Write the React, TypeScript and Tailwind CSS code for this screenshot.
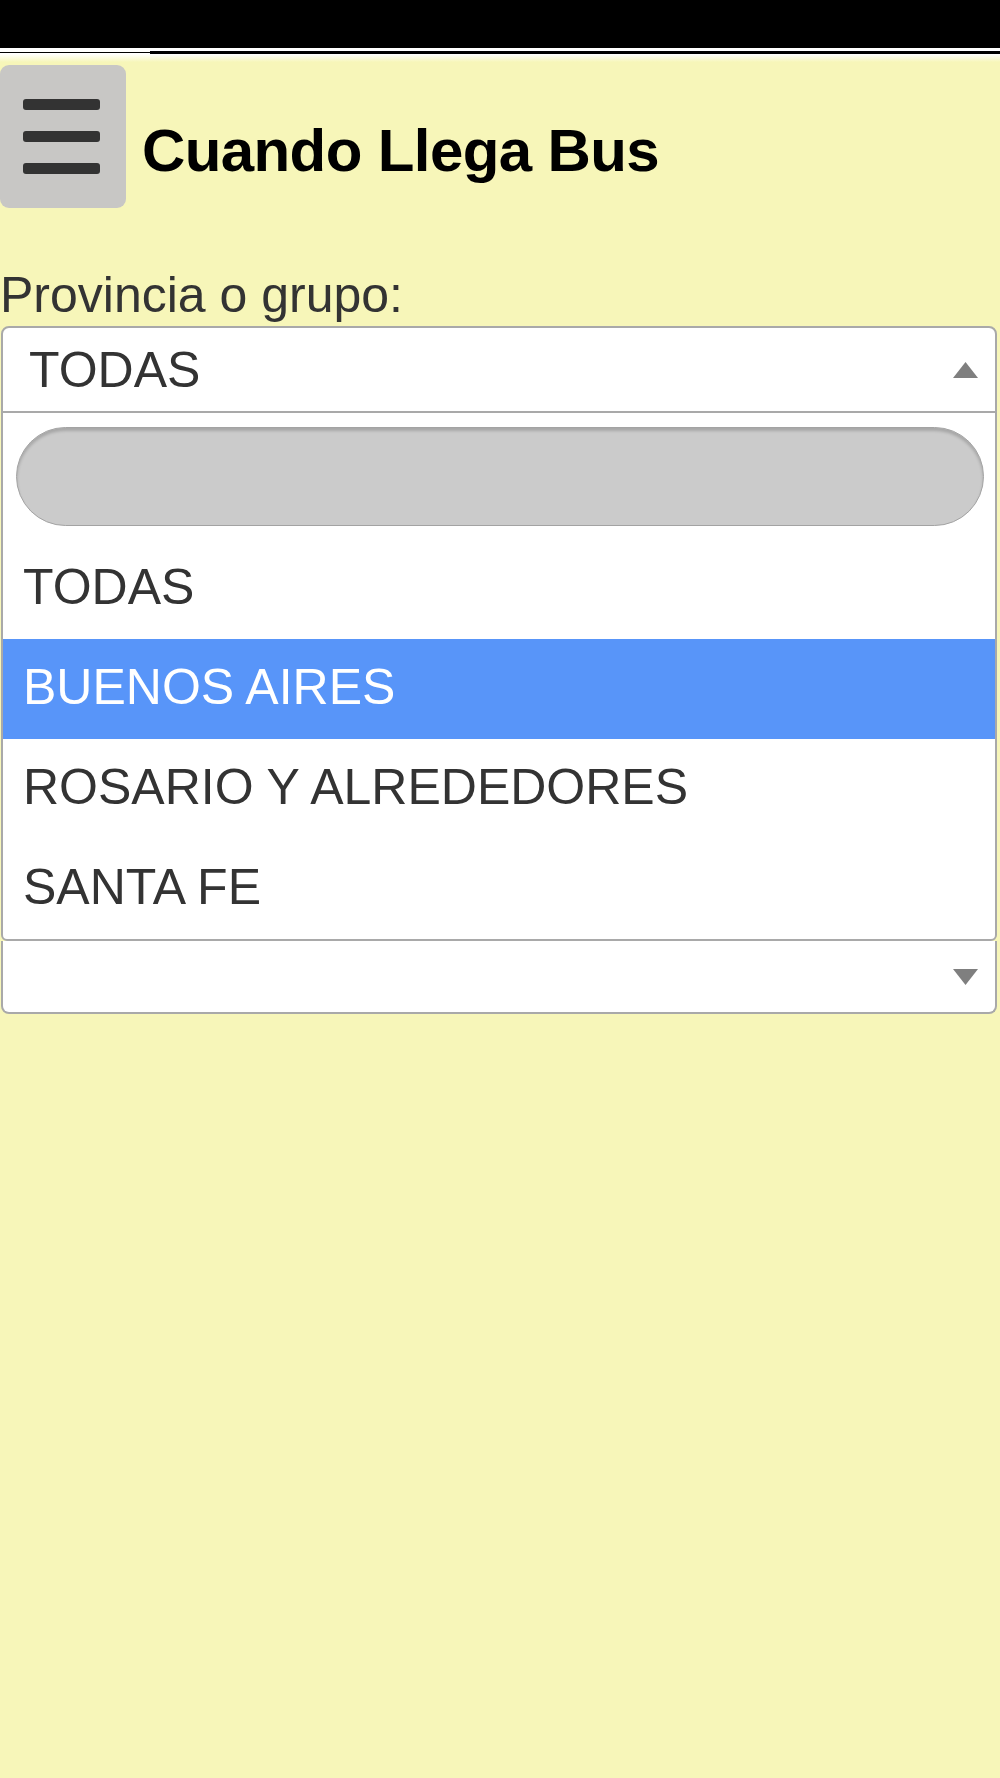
import React from "react";

function Arrow({ up }: { up: boolean }) {
  return (
    <svg width="25" height="16" viewBox="0 0 25 16" className="shrink-0">
      {up ? (
        <polygon points="12.5,0 25,16 0,16" fill="#7f7f7f" />
      ) : (
        <polygon points="0,0 25,0 12.5,16" fill="#7f7f7f" />
      )}
    </svg>
  );
}

export default function App() {
  const rows = ["TODAS", "BUENOS AIRES", "ROSARIO Y ALREDEDORES", "SANTA FE"];
  return (
    <div className="min-h-[1778px] bg-[#f7f6b9] font-['Liberation_Sans',Arial,sans-serif] text-[#333333]">
      {/* status bar */}
      <div className="h-[48px] bg-black" />
      <div className="h-[3px] bg-white" />
      <div className="flex h-[3px] bg-white">
        <div className="w-[150px] flex flex-col justify-center">
          <div className="h-[1px] bg-black" />
        </div>
        <div className="flex-1 bg-black" />
      </div>
      <div className="h-[8px] bg-gradient-to-b from-white to-[#f7f6b9]" />

      {/* header */}
      <div className="mt-[3px] flex items-center">
        <button className="flex h-[143px] w-[126px] flex-col items-center justify-center gap-[21px] rounded-[9px] bg-[#c8c7c5]">
          <span className="block h-[11px] w-[77px] rounded-[3px] bg-[#333333] -ml-[3px]" />
          <span className="block h-[11px] w-[77px] rounded-[3px] bg-[#333333] -ml-[3px]" />
          <span className="block h-[11px] w-[77px] rounded-[3px] bg-[#333333] -ml-[3px]" />
        </button>
        <h1 className="ml-[16px] mt-[28px] text-[60px] font-bold leading-none tracking-[-0.6px] text-black">
          Cuando Llega Bus
        </h1>
      </div>

      {/* label */}
      <div className="mt-[59px] text-[50px] leading-[56px] text-[#333333]">
        Provincia o grupo:
      </div>

      {/* open select */}
      <div className="ml-[1px] mr-[3px] mt-[3px] overflow-hidden rounded-[8px] rounded-b-[6px] border-2 border-[#a9a9a9] bg-white">
        <div className="flex h-[85px] items-center justify-between border-b-2 border-[#a9a9a9] pl-[26px] pr-[17px]">
          <span className="text-[50px] leading-none">TODAS</span>
          <Arrow up />
        </div>
        <div className="pt-[14px]">
          <div className="ml-[13px] mr-[11px] h-[99px] rounded-full border-[1.5px] border-[#a3a3a3] bg-[#cbcbcb] shadow-[inset_0_3px_3px_rgba(0,0,0,0.18)]" />
        </div>
        <div className="mt-[13px]">
          {rows.map((r, i) => (
            <div
              key={r}
              className={
                i === 1
                  ? "flex h-[100px] items-center bg-[#5895f9] pb-[4px] pl-[20px] text-[50px] text-white"
                  : "flex h-[100px] items-center pb-[4px] pl-[20px] text-[50px] text-[#333333]"
              }
            >
              {r}
            </div>
          ))}
        </div>
      </div>

      {/* second select, partly covered */}
      <div className="ml-[1px] mr-[3px] flex h-[73px] items-center justify-end rounded-b-[8px] border-x-2 border-b-2 border-[#a9a9a9] bg-white pr-[17px]">
        <Arrow up={false} />
      </div>
    </div>
  );
}
